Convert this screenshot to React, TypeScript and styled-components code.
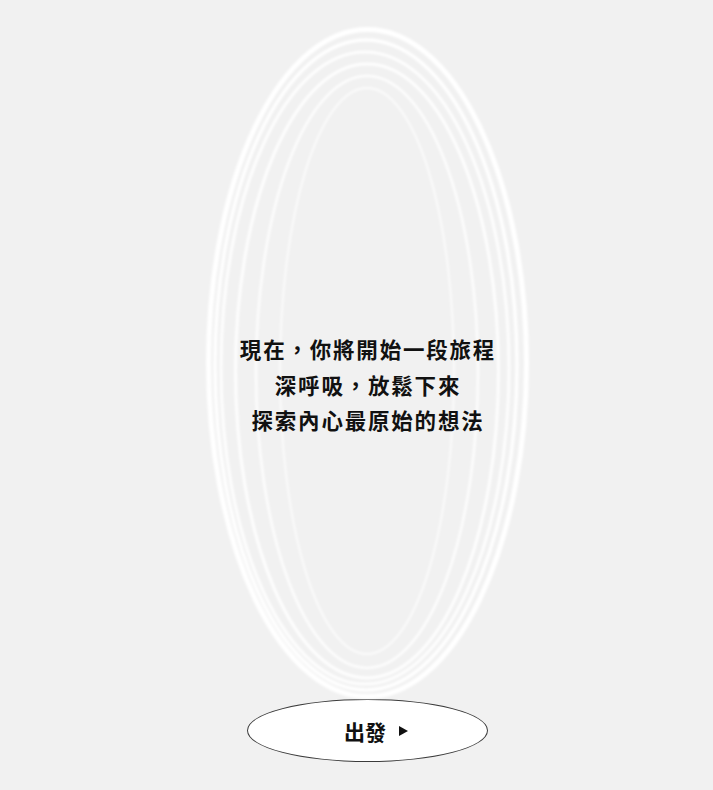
import React from "react";
import styled, { createGlobalStyle } from "styled-components";

const GlobalStyle = createGlobalStyle`
  html, body {
    margin: 0;
    padding: 0;
    background: #f1f1f1;
  }
  body {
    font-family: "Noto Sans CJK TC", "Noto Sans", sans-serif;
    color: #111;
  }
`;

const Page = styled.main`
  min-height: 790px;
  display: flex;
  flex-direction: column;
  align-items: center;
  padding: 20px 0 0 21px;
  box-sizing: border-box;
`;

const Stage = styled.section`
  position: relative;
  width: 330px;
  height: 679px;
  display: flex;
  align-items: center;
  justify-content: center;
  padding-top: 50px;
  box-sizing: border-box;
`;

const Rings = styled.svg`
  position: absolute;
  inset: 0;
  width: 100%;
  height: 100%;
  overflow: visible;
  pointer-events: none;
`;

const Message = styled.div`
  position: relative;
  display: flex;
  flex-direction: column;
  align-items: center;
  font-size: 21.5px;
  font-weight: 700;
  line-height: 35.5px;
  letter-spacing: 1.8px;
  margin-left: 2px;
  color: #111;
`;

const Line = styled.p`
  margin: 0;
  white-space: nowrap;
`;

const StartButton = styled.button`
  width: 241px;
  height: 63px;
  border-radius: 50%;
  border: 1px solid #3c3c3c;
  background: #ffffff;
  display: flex;
  align-items: center;
  justify-content: center;
  gap: 13px;
  font-family: "Noto Sans CJK TC", "Noto Sans", sans-serif;
  font-size: 21px;
  font-weight: 700;
  color: #111;
  cursor: pointer;
  padding: 0 0 0 18px;
  box-sizing: border-box;
`;

const Arrow = styled.span`
  width: 0;
  height: 0;
  border-top: 5px solid transparent;
  border-bottom: 5px solid transparent;
  border-left: 9px solid #111;
  margin-top: 1px;
`;

type Ring = { cx: number; cy: number; rx: number; ry: number; w: number; o: number };

const rings: Ring[] = [
  { cx: 165.5, cy: 343, rx: 159, ry: 333.5, w: 5, o: 1 },
  { cx: 164, cy: 345, rx: 151, ry: 325, w: 3.5, o: 0.95 },
  { cx: 163, cy: 348, rx: 144, ry: 316, w: 3, o: 0.9 },
  { cx: 165, cy: 351, rx: 131.5, ry: 307, w: 3, o: 0.9 },
  { cx: 165, cy: 352, rx: 111, ry: 296, w: 2.5, o: 0.85 },
  { cx: 165, cy: 351, rx: 87, ry: 283, w: 1.8, o: 0.75 },
];

export default function App() {
  return (
    <>
      <GlobalStyle />
      <Page>
        <Stage>
          <Rings viewBox="0 0 330 679" aria-hidden="true">
            <defs>
              <filter id="soft" x="-10%" y="-10%" width="120%" height="120%">
                <feGaussianBlur stdDeviation="1" />
              </filter>
            </defs>
            <g filter="url(#soft)" fill="none" stroke="#ffffff">
              {rings.map((r, i) => (
                <ellipse
                  key={i}
                  cx={r.cx}
                  cy={r.cy}
                  rx={r.rx}
                  ry={r.ry}
                  strokeWidth={r.w}
                  strokeOpacity={r.o}
                />
              ))}
            </g>
          </Rings>
          <Message>
            <Line>現在，你將開始一段旅程</Line>
            <Line>深呼吸，放鬆下來</Line>
            <Line>探索內心最原始的想法</Line>
          </Message>
        </Stage>
        <StartButton type="button">
          出發
          <Arrow />
        </StartButton>
      </Page>
    </>
  );
}
